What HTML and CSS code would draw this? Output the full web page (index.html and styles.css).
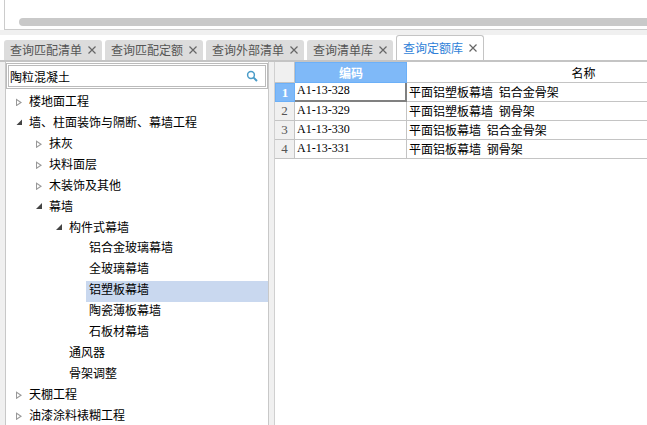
FILE: index.html
```html
<!DOCTYPE html>
<html lang="en">
<head>
  <meta charset="UTF-8">
  <title>查询定额库</title>
  <link rel="stylesheet" href="styles.css">
</head>
<body>

  <!-- Top panel with scrollbar -->
  <div class="top-panel">
    <div class="top-inner">
      <div class="scrollbar"></div>
    </div>
  </div>

  <!-- Tabs -->
  <div class="tabs">
    <div class="tab">查询匹配清单<svg class="close" width="8" height="8" viewBox="0 0 8 8"><path d="M0.5 0.5 L7.5 7.5 M7.5 0.5 L0.5 7.5"/></svg></div>
    <div class="tab">查询匹配定额<svg class="close" width="8" height="8" viewBox="0 0 8 8"><path d="M0.5 0.5 L7.5 7.5 M7.5 0.5 L0.5 7.5"/></svg></div>
    <div class="tab">查询外部清单<svg class="close" width="8" height="8" viewBox="0 0 8 8"><path d="M0.5 0.5 L7.5 7.5 M7.5 0.5 L0.5 7.5"/></svg></div>
    <div class="tab">查询清单库<svg class="close" width="8" height="8" viewBox="0 0 8 8"><path d="M0.5 0.5 L7.5 7.5 M7.5 0.5 L0.5 7.5"/></svg></div>
    <div class="tab active">查询定额库<svg class="close" width="8" height="8" viewBox="0 0 8 8"><path d="M0.5 0.5 L7.5 7.5 M7.5 0.5 L0.5 7.5"/></svg></div>
  </div>

  <div class="main">
    <!-- Left tree -->
    <div class="tree-panel">
      <div class="search-box">
        <span class="search-text">陶粒混凝土</span>
        <svg class="search-icon" width="12" height="12" viewBox="0 0 12 12">
          <circle cx="5" cy="5" r="3.4" fill="none" stroke="#4a9cc8" stroke-width="1.5"/>
          <path d="M7.6 7.6 L11 11" stroke="#4a9cc8" stroke-width="2"/>
        </svg>
      </div>
      <ul class="tree">
        <li class="node lv0"><i class="arrow closed"></i>楼地面工程</li>
        <li class="node lv0"><i class="arrow open"></i>墙、柱面装饰与隔断、幕墙工程</li>
        <li class="node lv1"><i class="arrow closed"></i>抹灰</li>
        <li class="node lv1"><i class="arrow closed"></i>块料面层</li>
        <li class="node lv1"><i class="arrow closed"></i>木装饰及其他</li>
        <li class="node lv1"><i class="arrow open"></i>幕墙</li>
        <li class="node lv2"><i class="arrow open"></i>构件式幕墙</li>
        <li class="node lv3">铝合金玻璃幕墙</li>
        <li class="node lv3">全玻璃幕墙</li>
        <li class="node lv3 selected">铝塑板幕墙</li>
        <li class="node lv3">陶瓷薄板幕墙</li>
        <li class="node lv3">石板材幕墙</li>
        <li class="node lv2 leaf">通风器</li>
        <li class="node lv2 leaf">骨架调整</li>
        <li class="node lv0"><i class="arrow closed"></i>天棚工程</li>
        <li class="node lv0"><i class="arrow closed"></i>油漆涂料裱糊工程</li>
      </ul>
    </div>

    <!-- Right grid -->
    <div class="grid">
      <div class="cell corner"></div>
      <div class="cell head-code">编码</div>
      <div class="cell head-name">名称</div>

      <div class="cell row-no current">1</div>
      <div class="cell code focus">A1-13-328</div>
      <div class="cell name">平面铝塑板幕墙 铝合金骨架</div>

      <div class="cell row-no">2</div>
      <div class="cell code">A1-13-329</div>
      <div class="cell name">平面铝塑板幕墙 钢骨架</div>

      <div class="cell row-no">3</div>
      <div class="cell code">A1-13-330</div>
      <div class="cell name">平面铝板幕墙 铝合金骨架</div>

      <div class="cell row-no">4</div>
      <div class="cell code">A1-13-331</div>
      <div class="cell name">平面铝板幕墙 钢骨架</div>
    </div>
  </div>

</body>
</html>
```

FILE: styles.css
```css
* {
  box-sizing: border-box;
}

html, body {
  margin: 0;
  height: 425px;
  overflow: hidden;
}

body {
  background-color: #f0f0f0;
  font-family: "Noto Sans CJK SC", "Liberation Sans", sans-serif;
  font-size: 12px;
  color: #000;
}

.top-panel {
  height: 30px;
  padding-left: 4px;
  background-color: #fff;
}

.top-inner {
  height: 30px;
  padding: 18px 0 0 14px;
  border-left: 1px solid #ccc;
  border-bottom: 1px solid #ccc;
}

.scrollbar {
  height: 8px;
  background-color: #c9c9c9;
  border-radius: 4px 0 0 4px;
}

.tabs {
  display: flex;
  align-items: flex-end;
  gap: 3px;
  height: 27px;
  margin-top: 5px;
  padding-left: 4px;
  background-color: #fff;
  border-bottom: 2px solid #c4c4c4;
}

.tab {
  display: flex;
  align-items: center;
  height: 20px;
  padding: 0 6px;
  background-color: #dcdcdc;
  color: #555;
  border-radius: 3px 3px 0 0;
  line-height: 20px;
}

.tab.active {
  height: 25px;
  background-color: #fff;
  color: #2f7fd8;
  border: 1px solid #c4c4c4;
  border-bottom: none;
}

.close {
  margin-left: 6px;
  fill: none;
  stroke: #666;
  stroke-width: 1.2;
}

.main {
  display: flex;
  height: 363px;
  padding-left: 5px;
}

.tree-panel {
  width: 264px;
  background-color: #fff;
  border-left: 1px solid #c8c8c8;
  border-right: 1px solid #c8c8c8;
}

.search-box {
  display: flex;
  align-items: center;
  justify-content: space-between;
  height: 26px;
  margin: 1px 0 0;
  padding: 0 7px 0 1px;
  background-color: #fff;
  border: 3px double #bbb;
}

.tree {
  list-style: none;
  margin: 4px 0 0;
  padding: 0;
}

.node {
  display: flex;
  align-items: center;
  height: 20.93px;
  padding-bottom: 6px;
  white-space: nowrap;
}

.lv0 { padding-left: 10px; }
.lv1 { padding-left: 30px; }
.lv2 { padding-left: 50px; }
.lv3 { margin-left: 80px; padding-left: 3px; }
.lv2.leaf { padding-left: 63px; }

.selected {
  background-color: #c9d8ef;
}

.arrow {
  flex: none;
  width: 6px;
  margin-right: 7px;
}

.arrow.closed {
  height: 8px;
  margin-top: 4px;
  background-color: #999;
  clip-path: polygon(evenodd, 0 0, 100% 50%, 0 100%, 0 0, 1px 2px, 1px 6px, 4px 4px, 1px 2px);
}

.arrow.open {
  height: 6px;
  margin-top: 2px;
  background-color: #444;
  clip-path: polygon(100% 0, 100% 100%, 0 100%);
}

.grid {
  display: grid;
  grid-template-columns: 20px 112px 353px;
  grid-template-rows: 21px;
  grid-auto-rows: 19px;
  flex: 1;
  align-content: start;
  margin-left: 5px;
  overflow: hidden;
  background-color: #fff;
  border-left: 1px solid #d0d0d0;
}

.cell {
  display: flex;
  align-items: center;
  border-right: 1px solid #c4c4c4;
  border-bottom: 1px solid #c4c4c4;
  background-color: #fff;
  white-space: nowrap;
}

.corner {
  background-color: #f0f0f0;
}

.head-code {
  justify-content: center;
  padding-bottom: 1px;
  background-color: #7fb9f8;
  color: #fff;
  font-weight: bold;
  border: 1px solid #6cb0f8;
}

.head-name {
  justify-content: center;
  border-right: none;
}

.row-no {
  justify-content: center;
  background-color: #f0f0f0;
  color: #555;
  font-family: "Liberation Serif", serif;
  font-size: 13px;
}

.row-no.current {
  background-color: #7fb9f8;
  color: #fff;
  font-weight: bold;
  border: 1px solid #6cb0f8;
}

.code {
  padding: 0 0 2px 2px;
  font-family: "Liberation Serif", serif;
  font-size: 12px;
}

.code.focus {
  border-right: 2px solid #808080;
  border-bottom: 2px solid #808080;
}

.name {
  padding: 0 0 2px 2px;
  border-right: none;
  word-spacing: 3px;
}
```
